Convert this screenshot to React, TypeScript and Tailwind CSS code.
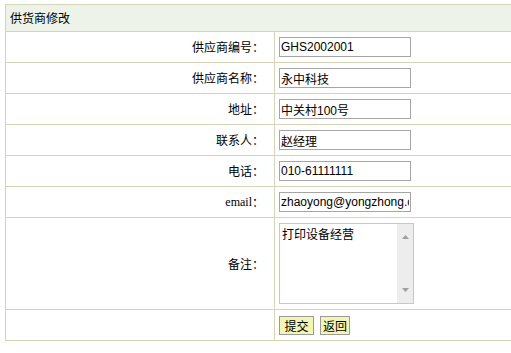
const fields = [
  { label: "供应商编号：", value: "GHS2002001" },
  { label: "供应商名称：", value: "永中科技" },
  { label: "地址：", value: "中关村100号" },
  { label: "联系人：", value: "赵经理" },
  { label: "电话：", value: "010-61111111" },
];

const cjk = "font-['SimSun','Noto_Sans_CJK_SC',sans-serif]";

const App = () => {
  return (
    <div className="w-[511px] h-[353px] overflow-hidden bg-white text-[12px] text-black">
      <div className="mt-[4px] ml-[5px] w-[512px] border-l border-t border-[#d4d4b8] grid grid-cols-[269px_1fr]">
        <div className={`col-span-2 h-[27px] border-b border-r border-[#d4d4b8] bg-[#eef3e9] pl-[4px] flex items-center ${cjk}`}>
          供货商修改
        </div>

        {fields.map((f) => (
          <div key={f.label} className="contents">
            <div className={`h-[31px] border-b border-r border-[#d4d4b8] flex items-center justify-end pr-[10px] ${cjk}`}>
              {f.label}
            </div>
            <div className="h-[31px] border-b border-r border-[#d4d4b8] flex items-center pl-[4px]">
              <input
                defaultValue={f.value}
                className="w-[132px] h-[20px] border border-[#a5a5a5] px-[1px] text-[12px] font-['Arial','Liberation_Sans','Noto_Sans_CJK_SC',sans-serif] outline-none"
              />
            </div>
          </div>
        ))}

        <div className="h-[31px] border-b border-r border-[#d4d4b8] flex items-center justify-end pr-[10px]">
          <span className="font-['Times_New_Roman','Liberation_Serif',serif] text-[12px]">email</span>
          <span className={cjk}>：</span>
        </div>
        <div className="h-[31px] border-b border-r border-[#d4d4b8] flex items-center pl-[4px]">
          <input
            defaultValue="zhaoyong@yongzhong.com"
            className="w-[132px] h-[20px] border border-[#a5a5a5] px-[1px] text-[12px] font-['Arial','Liberation_Sans',sans-serif] outline-none"
          />
        </div>

        <div className={`h-[92px] border-b border-r border-[#d4d4b8] flex items-center justify-end pr-[10px] ${cjk}`}>
          备注：
        </div>
        <div className="h-[92px] border-b border-r border-[#d4d4b8] pl-[4px] pt-[5px]">
          <div className="w-[135px] h-[81px] border border-[#c8c8c8] flex">
            <textarea
              defaultValue="打印设备经营"
              className={`flex-1 h-full px-[2px] py-[1px] text-[12px] resize-none overflow-hidden outline-none ${cjk}`}
            />
            <div className="w-[16px] h-full bg-[#ededed] flex flex-col items-center justify-between py-[11px]">
              <svg width="7" height="4" viewBox="0 0 7 4">
                <path d="M0 4 L3.5 0 L7 4 Z" fill="#a0a0a0" />
              </svg>
              <svg width="7" height="4" viewBox="0 0 7 4">
                <path d="M0 0 L3.5 4 L7 0 Z" fill="#a0a0a0" />
              </svg>
            </div>
          </div>
        </div>

        <div className="h-[31px] border-b border-r border-[#d4d4b8]" />
        <div className="h-[31px] border-b border-r border-[#d4d4b8] pl-[4px] pt-[6px] flex items-start gap-[6px]">
          <button className={`w-[35px] h-[19px] bg-[#f2f5b4] border border-[#9a9a9a] text-[12px] leading-none ${cjk}`}>
            提交
          </button>
          <button className={`w-[30px] h-[19px] bg-[#f2f5b4] border border-[#9a9a9a] text-[12px] leading-none ${cjk}`}>
            返回
          </button>
        </div>
      </div>
    </div>
  );
};

export default App;
